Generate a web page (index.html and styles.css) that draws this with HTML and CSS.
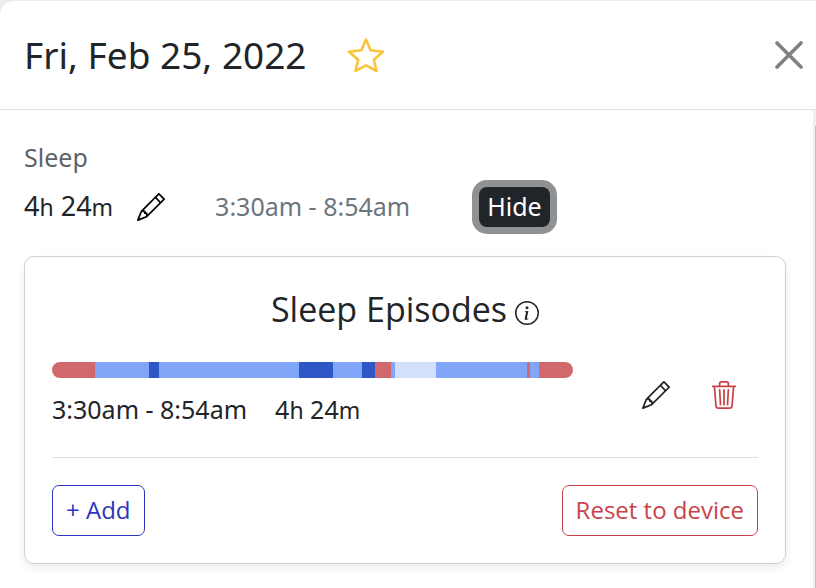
FILE: index.html
```html
<!DOCTYPE html>
<html lang="en">
<head>
  <meta charset="UTF-8">
  <title>Fri, Feb 25, 2022</title>
  <meta name="viewport" content="width=device-width, initial-scale=1.0">
  <link rel="stylesheet" href="styles.css">
</head>
<body>
  <svg class="sprite" aria-hidden="true">
    <symbol id="pencil" viewBox="0 0 16 16">
      <path d="M12.146.146a.5.5 0 0 1 .708 0l3 3a.5.5 0 0 1 0 .708l-10 10a.5.5 0 0 1-.168.11l-5 2a.5.5 0 0 1-.65-.65l2-5a.5.5 0 0 1 .11-.168l10-10zM11.207 2.5 13.5 4.793 14.793 3.5 12.5 1.207 11.207 2.5zm1.586 3L10.5 3.207 4 9.707V10h.5a.5.5 0 0 1 .5.5v.5h.5a.5.5 0 0 1 .5.5v.5h.293l6.5-6.5zm-9.761 5.175-.106.106-1.528 3.821 3.821-1.528.106-.106A.5.5 0 0 1 5 12.5V12h-.5a.5.5 0 0 1-.5-.5V11h-.5a.5.5 0 0 1-.468-.325z"/>
    </symbol>
  </svg>

  <div class="panel">
    <header class="panel-header">
      <h1>Fri, Feb 25, 2022</h1>
      <button class="icon-btn star" aria-label="Favorite">
        <svg width="38" height="36" viewBox="0 0 38 36">
          <path d="M19 2.5 23.6 13.3 36 14.7 26.8 22.8 29.6 34 19 28.4 8.4 34 11.2 22.8 2 14.7 14.4 13.3Z" fill="none" stroke="currentColor" stroke-width="2.6" stroke-linejoin="round"/>
        </svg>
      </button>
      <button class="icon-btn close" aria-label="Close">
        <svg width="28" height="28" viewBox="0 0 28 28">
          <path d="M2 2 26 26M26 2 2 26" stroke="currentColor" stroke-width="3.6" stroke-linecap="round"/>
        </svg>
      </button>
    </header>

    <div class="panel-body">
      <main class="content">
        <h2 class="label">Sleep</h2>
        <div class="summary">
          <span class="duration large">4<small>h</small> 24<small>m</small></span>
          <button class="icon-btn edit-total" aria-label="Edit sleep"><svg width="28" height="28"><use href="#pencil"/></svg></button>
          <span class="range">3:30am - 8:54am</span>
          <button class="hide-btn">Hide</button>
        </div>

        <section class="card">
          <h2 class="card-title">Sleep Episodes
            <svg width="24" height="24" viewBox="0 0 16 16" fill="currentColor">
              <path d="M8 15A7 7 0 1 1 8 1a7 7 0 0 1 0 14zm0 1A8 8 0 1 0 8 0a8 8 0 0 0 0 16z"/>
              <path d="m8.930 6.588-2.290.287-.082.380.450.083c.294.070.352.176.288.469l-.738 3.468c-.194.897.105 1.319.808 1.319.545 0 1.178-.252 1.465-.598l.088-.416c-.200.176-.492.246-.686.246-.275 0-.375-.193-.304-.533L8.930 6.588zM9 4.500a1 1 0 1 1-2 0 1 1 0 0 1 2 0z"/>
            </svg>
          </h2>

          <div class="episode">
            <div class="episode-info">
              <div class="stages">
                <span class="wake" style="flex-grow: 43"></span>
                <span class="light" style="flex-grow: 54"></span>
                <span class="deep" style="flex-grow: 10"></span>
                <span class="light" style="flex-grow: 140"></span>
                <span class="deep" style="flex-grow: 34"></span>
                <span class="light" style="flex-grow: 29"></span>
                <span class="deep" style="flex-grow: 13"></span>
                <span class="wake" style="flex-grow: 16"></span>
                <span class="light" style="flex-grow: 4"></span>
                <span class="rem" style="flex-grow: 41"></span>
                <span class="light" style="flex-grow: 91"></span>
                <span class="wake" style="flex-grow: 3"></span>
                <span class="light" style="flex-grow: 9"></span>
                <span class="wake" style="flex-grow: 34"></span>
              </div>
              <div class="times">
                <span>3:30am - 8:54am</span>
                <span class="duration">4<small>h</small> 24<small>m</small></span>
              </div>
            </div>
            <div class="episode-actions">
              <button class="icon-btn" aria-label="Edit episode"><svg width="28" height="28"><use href="#pencil"/></svg></button>
              <button class="icon-btn delete" aria-label="Delete episode">
                <svg width="28" height="28" viewBox="0 0 16 16">
                  <path d="M6.5 1h3a.5.5 0 0 1 .5.5v1H6v-1a.5.5 0 0 1 .5-.5ZM11 2.5v-1A1.5 1.5 0 0 0 9.5 0h-3A1.5 1.5 0 0 0 5 1.5v1H1.5a.5.5 0 0 0 0 1h.538l.853 10.66A2 2 0 0 0 4.885 16h6.23a2 2 0 0 0 1.994-1.84l.853-10.66h.538a.5.5 0 0 0 0-1H11Zm1.958 1-.846 10.58a1 1 0 0 1-.997.92h-6.23a1 1 0 0 1-.997-.92L3.042 3.5h9.916Zm-7.487 1a.5.5 0 0 1 .528.47l.5 8.5a.5.5 0 0 1-.998.06L5 5.03a.5.5 0 0 1 .47-.53Zm5.058 0a.5.5 0 0 1 .47.53l-.5 8.5a.5.5 0 1 1-.998-.06l.5-8.5a.5.5 0 0 1 .528-.47ZM8 4.5a.5.5 0 0 1 .5.5v8.5a.5.5 0 0 1-1 0V5a.5.5 0 0 1 .5-.5Z"/>
                </svg>
              </button>
            </div>
          </div>

          <div class="card-footer">
            <button class="btn add">+ Add</button>
            <button class="btn reset">Reset to device</button>
          </div>
        </section>
      </main>
      <div class="scrollbar"><div class="thumb"></div></div>
    </div>
  </div>
</body>
</html>
```
FILE: styles.css
```css
* {
  box-sizing: border-box;
}
body {
  margin: 0;
  padding-top: 1px;
  min-height: 100vh;
  display: flex;
  background: #ececec;
  font-family: "Noto Sans", sans-serif;
  font-size: 25px;
  line-height: 36px;
  color: #212529;
}
h1, h2 {
  margin: 0;
  font-weight: 400;
}
button {
  font: inherit;
  cursor: pointer;
}
.sprite {
  display: none;
}
.panel {
  flex: 1;
  display: flex;
  flex-direction: column;
  background: #fff;
  border-top-left-radius: 14px;
}
.panel-header {
  display: flex;
  align-items: center;
  height: 109px;
  padding: 0 13px 1px 24px;
  border-bottom: 1px solid #dee2e6;
}
.panel-header h1 {
  font-size: 37px;
  line-height: 48px;
}
.icon-btn {
  display: flex;
  padding: 0;
  border: 0;
  background: none;
  color: #212529;
}
.icon-btn svg {
  fill: currentColor;
}
.star {
  margin-left: 40px;
  color: #f8c53a;
}
.close {
  margin-left: auto;
  color: #808080;
}
.panel-body {
  flex: 1;
  display: flex;
}
.content {
  flex: 1;
  padding: 29px 27px 24px 24px;
}
.scrollbar {
  width: 3px;
  padding: 16px 0 0 2px;
  background: #f0f0f0;
}
.thumb {
  height: 100%;
  background: #c1c1c1;
}
.label {
  font-size: 25px;
  color: #5f6368;
}
.summary {
  display: flex;
  align-items: baseline;
  margin-top: 12px;
}
.duration small {
  font-size: 23px;
}
.large {
  font-size: 27px;
}
.edit-total {
  align-self: center;
  margin: 0 50px 0 24px;
  color: #000;
}
.range {
  color: #6c757d;
}
.hide-btn {
  height: 40px;
  margin-left: 69px;
  padding: 0 8px 2px;
  border: 0;
  border-radius: 8px;
  background: #212529;
  color: #fff;
  box-shadow: 0 0 0 7px #909192;
}
.card {
  margin-top: 29px;
  padding: 28px 27px 27px;
  border: 1px solid #cfd0d1;
  border-radius: 10px;
  box-shadow: 0 4px 8px rgba(0, 0, 0, 0.08);
}
.card-title {
  display: flex;
  align-items: center;
  justify-content: center;
  gap: 8px;
  font-family: "Open Sans", "Noto Sans", sans-serif;
  font-size: 34px;
  line-height: 48px;
}
.card-title svg {
  margin-top: 8px;
}
.episode {
  display: flex;
  align-items: center;
  padding: 29px 0 29px;
  border-bottom: 1px solid #dee2e6;
}
.episode-info {
  flex: 1;
}
.stages {
  display: flex;
  height: 16px;
  border-radius: 8px;
  overflow: hidden;
}
.wake { background: #d1696c; }
.light { background: #80a5f9; }
.deep { background: #2f56c5; }
.rem { background: #d3e0fb; }
.times {
  display: flex;
  gap: 28px;
  margin-top: 13px;
}
.episode-actions {
  display: flex;
  gap: 40px;
  padding: 0 20px 0 69px;
}
.delete {
  color: #c9434b;
}
.card-footer {
  display: flex;
  justify-content: space-between;
  padding-top: 27px;
}
.btn {
  height: 51px;
  padding: 0 13px 2px;
  border: 1px solid currentColor;
  border-radius: 7px;
  background: #fff;
  font-family: "Open Sans", "Noto Sans", sans-serif;
  font-size: 24px;
}
.add {
  color: #2b35bd;
}
.reset {
  color: #c9434b;
}
```
